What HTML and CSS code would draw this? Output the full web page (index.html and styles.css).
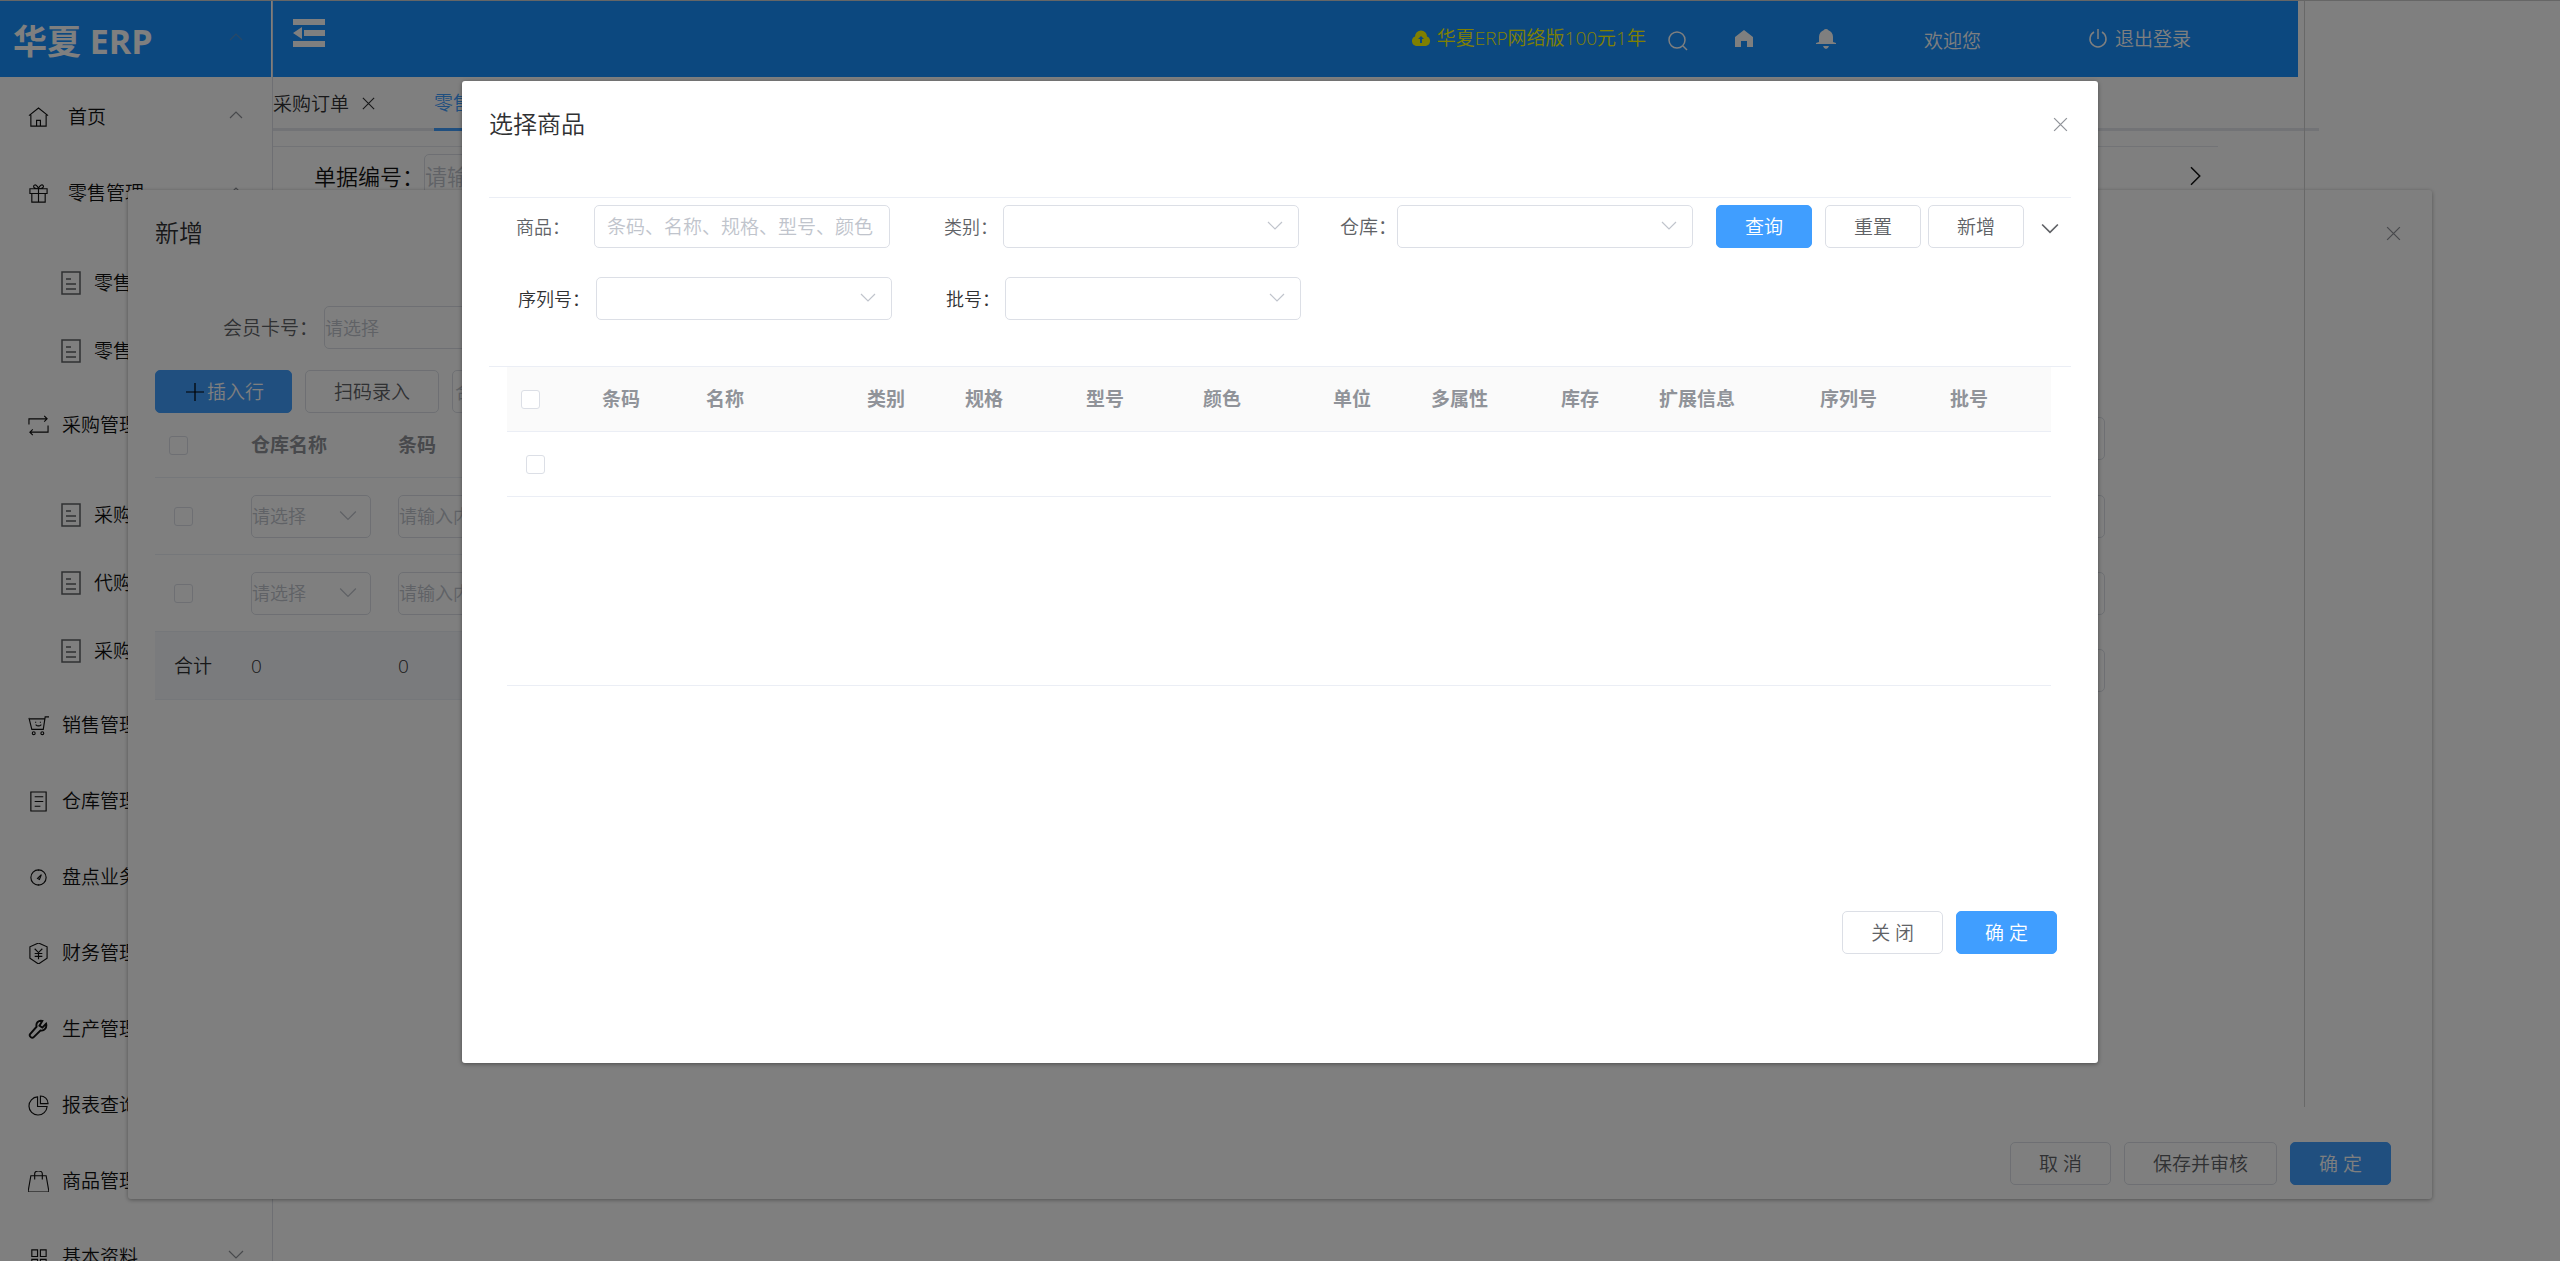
FILE: index.html
```html
<!DOCTYPE html>
<html lang="zh-CN">
<head>
<meta charset="utf-8">
<title>华夏 ERP</title>
<link rel="stylesheet" href="styles.css">
</head>
<body>
<svg class="defs" aria-hidden="true">
  <symbol id="up" viewBox="0 0 16 16"><path d="M2 11l6-6 6 6"/></symbol>
  <symbol id="down" viewBox="0 0 16 16"><path d="M1 4l7 7 7-7"/></symbol>
  <symbol id="cross" viewBox="0 0 16 16"><path d="M2 2l12 12M14 2L2 14"/></symbol>
  <symbol id="doc" viewBox="0 0 20 24"><path d="M1 1h18v22H1zM5 8h5M5 13h10M5 18h10"/></symbol>
</svg>
<div class="app">
  <aside class="sidebar">
    <div class="brand"><h1>华夏 ERP</h1><svg class="chev"><use href="#up"/></svg></div>
    <nav class="menu">
      <a class="item wide" href="#"><svg viewBox="0 0 22 22"><path d="M1 9l10-8 10 8M3 8v12h16V8M9 20v-6h4v6"/></svg><span>首页</span><svg class="chev"><use href="#up"/></svg></a>
      <a class="item wide" href="#"><svg viewBox="0 0 22 22"><path d="M2 6h18v5H2zM4 11v9h14v-9M11 6v14M11 6C8 6 5 5 6 3s4-1 5 3c1-4 4-5 5-3s-2 3-5 3"/></svg><span>零售管理</span><svg class="chev"><use href="#up"/></svg></a>
      <div class="sub">
        <a href="#"><svg><use href="#doc"/></svg>零售出库</a>
        <a href="#"><svg><use href="#doc"/></svg>零售退货</a>
      </div>
      <a class="item" href="#"><svg viewBox="0 0 22 22"><path d="M1 10V4h19M17 1l3 3-3 3M21 11v7H2M5 15l-3 3 3 3"/></svg><span>采购管理</span></a>
      <div class="sub">
        <a href="#"><svg><use href="#doc"/></svg>采购订单</a>
        <a href="#"><svg><use href="#doc"/></svg>代购订单</a>
        <a href="#"><svg><use href="#doc"/></svg>采购入库</a>
      </div>
      <a class="item" href="#"><svg viewBox="0 0 22 22"><path d="M1 3l3 12h12l2-13h4M2 4h16M8 7v1M13 7v1M8 10q3 3 6 0"/><circle cx="6" cy="19" r="1.5"/><circle cx="15" cy="19" r="1.5"/></svg><span>销售管理</span></a>
      <a class="item" href="#"><svg viewBox="0 0 22 22"><path d="M3 1h16v20H3zM7 6h9M7 11h9M7 16h6"/></svg><span>仓库管理</span></a>
      <a class="item" href="#"><svg viewBox="0 0 22 22"><circle cx="11" cy="11" r="8"/><path d="M10 12l4-4-2 5zM11 3v1M11 18v1"/></svg><span>盘点业务</span></a>
      <a class="item" href="#"><svg viewBox="0 0 22 22"><path d="M11 0l9 4v12l-9 6-9-6V4zM7 6l4 4 4-4M11 10v7M7 11h8M7 14h8"/></svg><span>财务管理</span></a>
      <a class="item" href="#"><svg class="bold" viewBox="0 0 22 22"><path d="M19 5l-4 4-3-2 3-5c-4-1-7 2-6 6l-7 8c-1 2 2 5 4 3l7-7c4 1 7-3 6-7z"/></svg><span>生产管理</span></a>
      <a class="item" href="#"><svg viewBox="0 0 22 22"><path d="M10 2a9.500 9.500 0 1 0 10 10H10zM13 1v8h8a8 8 0 0 0-8-8z"/></svg><span>报表查询</span></a>
      <a class="item" href="#"><svg viewBox="0 0 22 22"><path d="M3 5h16l3 17H0zM7 9V3q0-3 4-3t4 3v6"/></svg><span>商品管理</span></a>
      <a class="item" href="#"><svg viewBox="0 0 22 22"><path d="M4 3h6v7H4zM13 3h6v7h-6zM4 13h6v7H4zM13 13h6v7h-6z"/></svg><span>基本资料</span><svg class="chev"><use href="#down"/></svg></a>
    </nav>
  </aside>
  <main class="main">
    <header class="topbar">
      <button class="fold" aria-label="折叠菜单"><svg viewBox="0 0 32 28"><path d="M0 0h32v6H0zM11 11h21v6H11zM0 22h32v6H0zM0 14l9-6v12z"/></svg></button>
      <a class="promo" href="#"><svg viewBox="0 0 20 16"><path d="M5 16a5 5 0 0 1-1-9.500 6 6 0 0 1 12 0A5 5 0 0 1 15 16z"/><path class="hole" d="M9 13V9H7l3-3 3 3h-2v4z"/></svg>华夏ERP网络版100元1年</a>
      <button class="tool search" aria-label="搜索"><svg class="line" viewBox="0 0 20 20"><circle cx="9" cy="9" r="8"/><path d="M15 15l4 4"/></svg></button>
      <button class="tool home" aria-label="首页"><svg viewBox="0 0 20 20"><path d="M10 1L1 8v10h6v-6h6v6h6V8z"/></svg></button>
      <button class="tool bell" aria-label="通知"><svg viewBox="0 0 20 20"><path d="M10 0q2 0 2 1 5 2 5 7v5l3 1v1H0v-1l3-1V8q0-5 5-7 0-1 2-1zM7 17h6q-1 3-3 3t-3-3z"/></svg></button>
      <span class="welcome">欢迎您</span>
      <button class="logout"><svg class="line" viewBox="0 0 20 20"><path d="M10 0v10M6 3a8 8 0 1 0 8 0"/></svg>退出登录</button>
    </header>
    <nav class="tabs">
      <a href="#">采购订单<svg><use href="#cross"/></svg></a>
      <a class="on" href="#">零售出库</a>
    </nav>
    <form class="query">
      <label for="billNo">单据编号：</label><input id="billNo" placeholder="请输入内容">
      <svg class="next" viewBox="0 0 16 16"><path d="M4 1l7 7-7 7"/></svg>
    </form>
  </main>
  <section class="drawer" role="dialog" aria-label="新增">
    <div class="head"><h2>新增</h2><button aria-label="关闭"><svg><use href="#cross"/></svg></button></div>
    <div class="member"><label for="card">会员卡号：</label><input id="card" placeholder="请选择"></div>
    <div class="actions">
      <button class="btn primary"><svg class="plus" viewBox="0 0 18 18"><path d="M9 0v18M0 9h18"/></svg>插入行</button>
      <button class="btn">扫码录入</button>
      <input aria-label="合并" placeholder="合并">
    </div>
    <table class="lines">
      <colgroup><col class="l-check"><col class="l-store"><col><col class="l-last"></colgroup>
      <thead><tr><th><input type="checkbox" aria-label="全选"></th><th>仓库名称</th><th>条码</th><th><input aria-label="备注"></th></tr></thead>
      <tbody>
        <tr><td><input type="checkbox" aria-label="选择"></td><td><div class="pick"><input aria-label="仓库名称" placeholder="请选择"><svg><use href="#down"/></svg></div></td><td><input aria-label="条码" placeholder="请输入内容"></td><td><input aria-label="备注"></td></tr>
        <tr><td><input type="checkbox" aria-label="选择"></td><td><div class="pick"><input aria-label="仓库名称" placeholder="请选择"><svg><use href="#down"/></svg></div></td><td><input aria-label="条码" placeholder="请输入内容"></td><td><input aria-label="备注"></td></tr>
      </tbody>
      <tfoot><tr><td>合计</td><td>0</td><td>0</td><td><input aria-label="备注"></td></tr></tfoot>
    </table>
    <div class="foot"><button class="btn">取 消</button><button class="btn">保存并审核</button><button class="btn primary">确 定</button></div>
  </section>
  <div class="edge"></div>
</div>
<div class="mask">
  <section class="dialog" role="dialog" aria-label="选择商品">
    <div class="head"><h2>选择商品</h2><button aria-label="关闭"><svg><use href="#cross"/></svg></button></div>
    <form class="filters">
      <div class="row">
        <label for="goods">商品：</label><input id="goods" class="ctl" placeholder="条码、名称、规格、型号、颜色">
        <label for="kind">类别：</label><div class="sel"><select id="kind" class="ctl"><option></option></select><svg><use href="#down"/></svg></div>
        <label for="store" class="store">仓库：</label><div class="sel"><select id="store" class="ctl"><option></option></select><svg><use href="#down"/></svg></div>
        <div class="btns"><button type="button" class="btn primary">查询</button><button type="button" class="btn">重置</button><button type="button" class="btn">新增</button></div>
        <svg class="more"><use href="#down"/></svg>
      </div>
      <div class="row second">
        <label for="serial">序列号：</label><div class="sel"><select id="serial" class="ctl"><option></option></select><svg><use href="#down"/></svg></div>
        <label for="batch">批号：</label><div class="sel"><select id="batch" class="ctl"><option></option></select><svg><use href="#down"/></svg></div>
      </div>
    </form>
    <div class="grid">
      <table>
        <colgroup><col class="c83"><col class="c104"><col class="c161"><col class="c98"><col class="c121"><col class="c117"><col class="c130"><col class="c98"><col class="c130"><col class="c98"><col class="c161"><col class="c130"><col></colgroup>
        <thead><tr><th><input type="checkbox" aria-label="全选"></th><th>条码</th><th>名称</th><th>类别</th><th>规格</th><th>型号</th><th>颜色</th><th>单位</th><th>多属性</th><th>库存</th><th>扩展信息</th><th>序列号</th><th>批号</th></tr></thead>
        <tbody><tr><td><input type="checkbox" aria-label="选择"></td><td colspan="12"></td></tr></tbody>
      </table>
    </div>
    <div class="foot"><button class="btn">关 闭</button><button class="btn primary">确 定</button></div>
  </section>
</div>
</body>
</html>
```

FILE: styles.css
```css
* { box-sizing: border-box; }
body { margin: 0; background: #fff; color: #303133; font: 350 19px/28px "Open Sans", "Noto Sans CJK SC", sans-serif; overflow: hidden; }
h1, h2 { margin: 0; }
a { color: inherit; text-decoration: none; }
button, input, select { font: inherit; color: inherit; margin: 0; }
button { padding: 0; border: 0; background: none; }
svg { display: block; flex: none; fill: none; stroke: currentColor; stroke-width: 1.2; }
.defs { position: absolute; width: 0; height: 0; }
input:not([type]), select { height: 43px; border: 1px solid #dcdfe6; border-radius: 5px; background: #fff; }
::placeholder { color: #c0c4cc; opacity: 1; }
input[type=checkbox] { appearance: none; display: block; width: 19px; height: 19px; border: 1px solid #dcdfe6; border-radius: 3px; background: #fff; }
table { width: 100%; table-layout: fixed; border-collapse: separate; border-spacing: 0; }
th { text-align: left; font-weight: 700; color: #909399; }
.btn { height: 43px; padding: 0 28px; border: 1px solid #dcdfe6; border-radius: 5px; background: #fff; color: #606266; white-space: nowrap; }
.primary { border-color: #409eff; background: #409eff; color: #fff; }

.app { position: relative; display: flex; height: 100vh; border-top: 1px solid #ccc; overflow: hidden; }
.sidebar { width: 273px; flex: none; border-right: 1px solid #dcdfe6; }
.chev { width: 16px; height: 16px; margin-left: auto; color: #909399; }
.brand { display: flex; align-items: center; height: 76px; margin-right: 1px; padding: 4px 27px 0 13px; background: #1890ff; color: #fff; }
.brand h1 { font-size: 34px; line-height: 40px; }
.brand .chev { opacity: .5; margin-bottom: 8px; }
.menu { padding-top: 2px; }
.item { display: flex; align-items: center; gap: 13px; height: 76px; padding: 0 28px; color: #111; white-space: nowrap; }
.item svg:first-child { width: 21px; height: 21px; }
.item .bold { stroke-width: 2; }
.item .chev { margin-bottom: 4px; }
.wide { gap: 19px; }
.sub { padding: 18px 0 2px; }
.sub a { display: flex; align-items: center; gap: 13px; height: 68px; padding-left: 61px; color: #111; }
.sub svg { width: 20px; height: 24px; color: #606266; stroke-width: 1.5; }

.main { flex: 1; min-width: 0; }
.topbar { display: flex; align-items: center; height: 76px; margin-right: 262px; padding: 0 107px 0 20px; background: #1890ff; color: #fff; }
.topbar svg { fill: currentColor; stroke: none; width: 20px; height: 20px; }
.topbar .line { fill: none; stroke: currentColor; stroke-width: 1.5; }
.topbar .fold { margin: 0 auto 12px 0; }
.topbar .fold svg { width: 32px; height: 28px; }
.promo { display: flex; align-items: center; gap: 6px; color: #ff0; margin-bottom: 3px; }
.topbar .promo svg { height: 16px; }
.topbar .hole { fill: #1890ff; }
.search { margin: 3px 0 0 22px; }
.home { margin-left: 46px; }
.bell { margin-left: 62px; }
.welcome { margin: 4px 0 0 88px; }
.logout { display: flex; align-items: center; gap: 7px; margin-left: 107px; }
.tabs { display: flex; gap: 58px; height: 54px; margin-right: 241px; border-bottom: 3px solid #e4e7ed; }
.tabs a { display: flex; align-items: center; gap: 12px; margin-bottom: -3px; padding-bottom: 1px; }
.tabs svg { width: 15px; height: 15px; }
.tabs .on { color: #409eff; border-bottom: 3px solid #409eff; padding: 0; }
.query { display: flex; align-items: center; margin: 15px 342px 0 0; padding: 7px 12px 0 41px; border-top: 1px solid #e4e7ed; font-size: 22px; color: #111; }
.query input { width: 240px; padding: 0; }
.query .next { width: 20px; height: 20px; margin-left: auto; }

.drawer { position: absolute; top: 189px; left: 5%; right: 5%; display: flex; flex-direction: column; min-height: 1009px; padding: 26px 41px 14px 27px; border-radius: 3px; background: #fff; box-shadow: 0 1px 4px rgba(0,0,0,.35); color: #606266; }
.head { display: flex; align-items: center; justify-content: space-between; color: #303133; }
.head h2 { font-size: 24px; font-weight: 350; line-height: 34px; }
.head button { color: #909399; }
.head svg { width: 17px; height: 17px; }
.drawer .head { margin-right: -11px; }
.member { display: flex; align-items: center; margin: 56px 0 0 68px; }
.member label { width: 101px; }
.member input { width: 240px; padding: 0; font-size: 18px; }
.actions { display: flex; gap: 13px; margin-top: 21px; }
.actions .primary { display: flex; align-items: center; gap: 3px; width: 137px; padding-left: 30px; }
.plus { width: 18px; height: 18px; color: #000; }
.actions input { width: 200px; padding: 0 2px; }
.lines { width: auto; margin-right: 295px; }
.l-check { width: 80px; }
.l-store { width: 147px; }
.l-last { width: 120px; }
.lines th, .lines td { height: 77px; padding: 0 11px 0 16px; border-bottom: 1px solid #ebeef5; }
.lines th { height: 65px; }
.lines th:first-child { padding-left: 14px; }
.lines td:first-child { padding-left: 19px; }
.lines tfoot td { height: 68px; background: #f5f7fa; color: #303133; }
.lines tr > :last-child { padding-right: 0; }
.lines th:last-child { padding-top: 4px; vertical-align: top; }
.lines tfoot td:last-child { padding-bottom: 7px; vertical-align: bottom; }
.lines td input:not([type]), .lines th input:not([type]) { display: block; width: 100%; padding: 0; font-size: 18px; }
.lines tr > :last-child input:not([type]) { width: calc(100% + 9px); }
.pick { position: relative; }
.pick svg { position: absolute; right: 14px; top: 12px; width: 18px; height: 18px; color: #c0c4cc; }
.foot { display: flex; justify-content: flex-end; gap: 13px; margin-top: auto; }
.edge { position: absolute; top: 0; right: 255px; width: 1px; height: 1106px; background: #d0d0d0; }

.mask { position: absolute; inset: 0; background: rgba(0,0,0,.5); }
.dialog { display: flex; flex-direction: column; min-height: 982px; margin: 81px 462px 0; padding: 26px 27px 109px; border-radius: 3px; background: #fff; box-shadow: 0 1px 4px rgba(0,0,0,.4); }
.dialog .head { padding-right: 2px; }
.filters { margin-top: 56px; padding: 7px 0 46px 27px; border: solid #ebeef5; border-width: 1px 0; font-size: 18px; color: #606266; }
.row { display: flex; align-items: center; font-size: 18px; }
.row label { width: 78px; }
.row .ctl { display: block; width: 296px; padding: 0 12px; font-size: 19px; appearance: none; }
.sel { position: relative; }
.sel svg { position: absolute; right: 16px; top: 13px; width: 16px; height: 16px; color: #c0c4cc; }
.row .ctl + label, .row .sel + label { width: 59px; margin-left: 54px; }
.row .sel + .store { width: 57px; margin-left: 41px; font-size: 19px; }
.btns { display: flex; gap: 7px; margin-left: 23px; font-size: 19px; }
.btns .primary { margin-right: 6px; }
.btns .btn { padding: 0; width: 96px; }
.more { width: 18px; height: 18px; margin: 5px 0 0 17px; stroke-width: 1.5; }
.second { margin-top: 29px; padding-left: 2px; color: #303133; }
.grid { min-height: 319px; margin: 0 20px 0 18px; border-bottom: 1px solid #ebeef5; }
.grid th, .grid td { height: 65px; padding: 0 12px; border-bottom: 1px solid #ebeef5; }
.grid th { background: #fafafa; }
.grid th:first-child { padding-left: 14px; }
.grid td:first-child { padding-left: 19px; }
.c83 { width: 83px; } .c98 { width: 98px; } .c104 { width: 104px; } .c117 { width: 117px; }
.c121 { width: 121px; } .c130 { width: 130px; } .c161 { width: 161px; }
.dialog .foot { padding-right: 14px; }
```
